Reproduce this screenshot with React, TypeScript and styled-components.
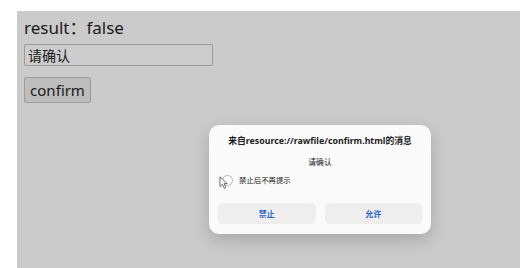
import styled, { createGlobalStyle } from 'styled-components';

const GlobalStyle = createGlobalStyle`
    html, body {
        margin: 0;
        padding: 0;
        background: #ffffff;
    }
    body {
        font-family: 'Noto Sans', 'Noto Sans CJK SC', sans-serif;
    }
`;

const App = () => {
    return (
        <>
            <GlobalStyle />
            <Page>
                <WebView>
                    <ResultText>result：false</ResultText>
                    <MessageInput defaultValue="请确认" readOnly />
                    <ConfirmButton>confirm</ConfirmButton>

                    <Dialog>
                        <DialogTitle>
                            来自resource://rawfile/confirm.html的消息
                        </DialogTitle>
                        <DialogMessage>请确认</DialogMessage>
                        <CheckRow>
                            <CheckCircle />
                            <CheckLabel>禁止后不再提示</CheckLabel>
                            <Cursor viewBox="0 0 12 16">
                                <path
                                    d="M1 1 L1 13 L4 10.2 L6.2 15 L8.2 14.1 L6 9.4 L10 9.4 Z"
                                    fill="#ffffff"
                                    stroke="#3a3a3a"
                                    strokeWidth="0.9"
                                    strokeLinejoin="round"
                                />
                            </Cursor>
                        </CheckRow>
                        <DialogActions>
                            <DialogButton>禁止</DialogButton>
                            <DialogButton>允许</DialogButton>
                        </DialogActions>
                    </Dialog>
                </WebView>
            </Page>
        </>
    );
};

export default App;

const Page = styled.div`
    width: 520px;
    height: 268px;
    padding: 11px 0 0 17px;
    box-sizing: border-box;
    overflow: hidden;
`;

const WebView = styled.div`
    position: relative;
    height: 257px;
    background: #cbcbcb;
    padding: 6px 0 0 7px;
    box-sizing: border-box;
    display: flex;
    flex-direction: column;
    align-items: flex-start;
`;

const ResultText = styled.div`
    font-size: 17px;
    line-height: 22px;
    color: #1a1a1a;
`;

const MessageInput = styled.input`
    margin-top: 5px;
    width: 189px;
    height: 22px;
    box-sizing: border-box;
    border: 1px solid #9a9a9a;
    border-radius: 2px;
    background: #cdcdcd;
    padding: 0 3px;
    font-family: 'Noto Sans CJK SC', sans-serif;
    font-size: 14px;
    color: #1a1a1a;
    outline: none;
`;

const ConfirmButton = styled.button`
    margin-top: 11px;
    width: 67px;
    height: 26px;
    box-sizing: border-box;
    border: 1px solid #9c9c9c;
    border-radius: 2px;
    background: #bdbdbd;
    padding: 0;
    font-family: 'Noto Sans', sans-serif;
    font-size: 15px;
    color: #1a1a1a;
`;

const Dialog = styled.div`
    position: absolute;
    left: 192px;
    top: 114px;
    width: 222px;
    height: 109px;
    box-sizing: border-box;
    background: #fafafa;
    border-radius: 10px;
    box-shadow: 0 6px 18px rgba(0, 0, 0, 0.18);
    padding: 10px 9px 0;
    display: flex;
    flex-direction: column;
    align-items: center;
    font-family: 'Noto Sans', 'Noto Sans CJK SC', sans-serif;
`;

const DialogTitle = styled.div`
    font-size: 8.8px;
    line-height: 12px;
    font-weight: 700;
    color: #1c1c1c;
    white-space: nowrap;
`;

const DialogMessage = styled.div`
    margin-top: 10px;
    font-size: 7.8px;
    line-height: 10px;
    color: #222222;
`;

const CheckRow = styled.div`
    position: relative;
    align-self: stretch;
    margin-top: 7px;
    padding-left: 4px;
    display: flex;
    align-items: center;
    gap: 6px;
    height: 12px;
`;

const CheckCircle = styled.span`
    width: 9px;
    height: 9px;
    border-radius: 50%;
    border: 1px solid #b5b5b5;
    background: #ffffff;
`;

const CheckLabel = styled.span`
    font-size: 7.4px;
    line-height: 10px;
    color: #222222;
`;

const Cursor = styled.svg`
    position: absolute;
    left: 1px;
    top: 2px;
    width: 10px;
    height: 13px;
`;

const DialogActions = styled.div`
    align-self: stretch;
    margin-top: 17px;
    display: grid;
    grid-template-columns: 1fr 1fr;
    gap: 9px;
`;

const DialogButton = styled.button`
    height: 21px;
    border: none;
    border-radius: 5px;
    background: #eeeeee;
    padding: 0;
    font-family: 'Noto Sans CJK SC', sans-serif;
    font-size: 8px;
    font-weight: 700;
    color: #2a64c8;
`;
